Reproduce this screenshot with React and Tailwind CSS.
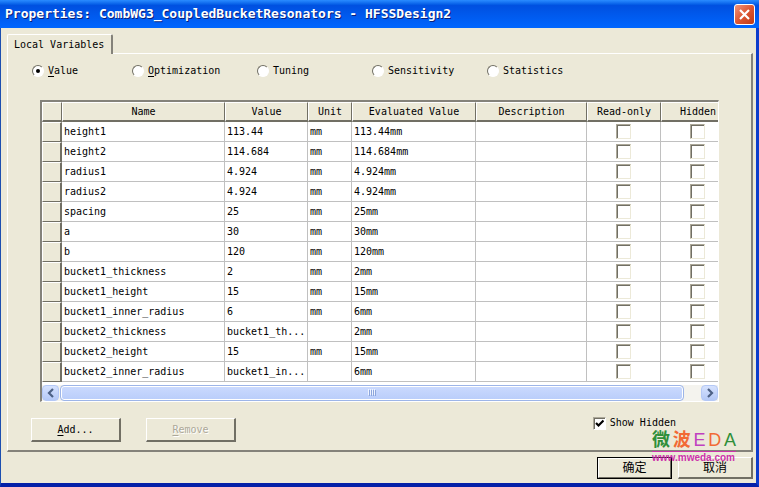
import { useState } from 'react';

const MODES = [
  { id: 'value', hotkey: 'V', rest: 'alue' },
  { id: 'optimization', hotkey: 'O', rest: 'ptimization' },
  { id: 'tuning', hotkey: '', rest: 'Tuning' },
  { id: 'sensitivity', hotkey: '', rest: 'Sensitivity' },
  { id: 'statistics', hotkey: '', rest: 'Statistics' },
];

const VARIABLES = [
  { name: 'height1', value: '113.44', unit: 'mm', evaluated: '113.44mm' },
  { name: 'height2', value: '114.684', unit: 'mm', evaluated: '114.684mm' },
  { name: 'radius1', value: '4.924', unit: 'mm', evaluated: '4.924mm' },
  { name: 'radius2', value: '4.924', unit: 'mm', evaluated: '4.924mm' },
  { name: 'spacing', value: '25', unit: 'mm', evaluated: '25mm' },
  { name: 'a', value: '30', unit: 'mm', evaluated: '30mm' },
  { name: 'b', value: '120', unit: 'mm', evaluated: '120mm' },
  { name: 'bucket1_thickness', value: '2', unit: 'mm', evaluated: '2mm' },
  { name: 'bucket1_height', value: '15', unit: 'mm', evaluated: '15mm' },
  { name: 'bucket1_inner_radius', value: '6', unit: 'mm', evaluated: '6mm' },
  { name: 'bucket2_thickness', value: 'bucket1_th...', unit: '', evaluated: '2mm' },
  { name: 'bucket2_height', value: '15', unit: 'mm', evaluated: '15mm' },
  { name: 'bucket2_inner_radius', value: 'bucket1_in...', unit: '', evaluated: '6mm' },
];

const HEADERS = ['Name', 'Value', 'Unit', 'Evaluated Value', 'Description', 'Read-only', 'Hidden'];

const RAISED = 'border-t border-l border-r-2 border-b-2 border-t-white border-l-white border-r-[#716f64] border-b-[#716f64]';
const HEAD_CELL = 'h-5 border-t border-l border-r border-b-2 border-t-white border-l-white border-r-[#716f64] border-b-[#716f64] bg-[#ece9d8] p-0 font-normal';
const CELL = 'h-5 overflow-hidden whitespace-nowrap border-r border-b border-[#c0c0c0] px-0.5 py-0';

const Radio = ({ mode, checked, onChange }) => (
  <label className="flex items-center gap-1">
    <span className="grid size-3 place-items-center">
      <input
        type="radio"
        name="mode"
        checked={checked}
        onChange={onChange}
        className="peer col-start-1 row-start-1 size-3 appearance-none rounded-full border border-t-[#716f64] border-l-[#716f64] border-r-white border-b-white bg-white"
      />
      <span className="pointer-events-none col-start-1 row-start-1 hidden size-1 rounded-full bg-black peer-checked:block" />
    </span>
    <span>
      {mode.hotkey && <u className="underline-offset-2">{mode.hotkey}</u>}
      {mode.rest}
    </span>
  </label>
);

const CellCheckbox = ({ label }) => (
  <input
    type="checkbox"
    aria-label={label}
    className="mx-auto block size-[15px] appearance-none border border-t-[#aca899] border-l-[#aca899] border-r-[#ece9d8] border-b-[#ece9d8] bg-white shadow-[inset_1px_1px_0_#716f64] checked:bg-[#716f64]"
  />
);

const VariableTable = () => (
  <table className="w-[693px] table-fixed border-separate border-spacing-0 bg-white">
    <colgroup>
      <col className="w-5" />
      <col className="w-[163px]" />
      <col className="w-[83px]" />
      <col className="w-[44px]" />
      <col className="w-[124px]" />
      <col className="w-[111px]" />
      <col className="w-[74px]" />
      <col className="w-[74px]" />
    </colgroup>
    <thead>
      <tr>
        <td className={HEAD_CELL} />
        {HEADERS.map((title) => (
          <th key={title} scope="col" className={HEAD_CELL}>{title}</th>
        ))}
      </tr>
    </thead>
    <tbody>
      {VARIABLES.map(({ name, value, unit, evaluated }) => (
        <tr key={name}>
          <td className="h-5 border-t border-l border-r-2 border-b border-t-white border-l-white border-r-[#716f64] border-b-[#716f64] bg-[#ece9d8] p-0" />
          <td className={CELL}>{name}</td>
          <td className={CELL}>{value}</td>
          <td className={CELL}>{unit}</td>
          <td className={CELL}>{evaluated}</td>
          <td className={CELL} />
          <td className={CELL}><CellCheckbox label={`${name} read-only`} /></td>
          <td className={CELL}><CellCheckbox label={`${name} hidden`} /></td>
        </tr>
      ))}
    </tbody>
  </table>
);

const ScrollButton = ({ label, path }) => (
  <button aria-label={label} className="grid h-4 w-[17px] shrink-0 place-items-center rounded-sm border border-[#b4c8f6] bg-linear-to-b from-[#d6e2fe] to-[#b4c8f6]">
    <svg width="8" height="10" viewBox="0 0 8 10" fill="none" stroke="#4d6185" strokeWidth="2.2">
      <path d={path} />
    </svg>
  </button>
);

const ScrollBar = () => (
  <div className="mt-[3px] flex h-4 gap-px bg-[#f4f3ee]">
    <ScrollButton label="Scroll left" path="M6 1 L2 5 L6 9" />
    <div className="flex flex-1">
      <div className="flex w-[97.5%] items-center justify-center gap-px rounded-sm border border-[#9db5e8] bg-linear-to-b from-[#cbdafe] to-[#b9cdfa] shadow-[inset_0_0_0_1px_white]">
        {[0, 1, 2, 3].map((i) => (
          <span key={i} className="h-1.5 w-px bg-[#8ca6dc] shadow-[-1px_-1px_0_#eef3ff]" />
        ))}
      </div>
    </div>
    <ScrollButton label="Scroll right" path="M2 1 L6 5 L2 9" />
  </div>
);

const Watermark = () => (
  <div className="pointer-events-none absolute right-5 bottom-[19px] w-[84px] font-['Liberation_Sans','Noto_Sans_CJK_SC',sans-serif] text-[#cc33aa]">
    <div className="flex h-6 items-center justify-between border-b border-[#cc33aa] text-[18px] leading-6">
      <span className="font-bold text-[#2f8f3a]">微</span>
      <span className="font-bold text-[#f26a35]">波</span>
      <span className="text-[#c040c0]">E</span>
      <span className="text-[#f26a35]">D</span>
      <span className="text-[#2f8f3a]">A</span>
    </div>
    <div className="text-[10px] leading-3 font-bold">www.mweda.com</div>
  </div>
);

export default function App() {
  const [mode, setMode] = useState('value');
  const [showHidden, setShowHidden] = useState(true);

  return (
    <div className="relative border-r-[3px] border-b-4 border-l border-r-[#0c3ccc] border-b-[#0420a8] border-l-[#1c4fb0] bg-[#ece9d8] font-['DejaVu_Sans_Mono','Liberation_Mono','Noto_Sans_CJK_SC',monospace] text-[10px] leading-4 text-black">
      <header className="-mr-[3px] -ml-px flex h-7 items-center justify-between bg-linear-to-b from-[#2a8cff] via-[#0050e0] via-20% to-[#0066ff] pr-1 pl-[5px] text-white">
        <h1 className="text-[13px] font-bold whitespace-nowrap [text-shadow:1px_1px_0_#0a1f7a]">
          Properties: CombWG3_CoupledBucketResonators - HFSSDesign2
        </h1>
        <button aria-label="Close" className="grid size-[21px] place-items-center rounded-[3px] border border-white bg-linear-to-br from-[#f0937a] via-[#dc5632] to-[#c03a14]">
          <svg width="13" height="13" viewBox="0 0 13 13" stroke="white" strokeWidth="2.2">
            <path d="M2 2 L11 11 M11 2 L2 11" />
          </svg>
        </button>
      </header>

      <main className="pt-1.5 pr-[3px] pb-1 pl-1.5">
        <div role="tablist" className="flex">
          <button role="tab" aria-selected="true" className="-mb-px h-5 rounded-t-xs border-t border-r-2 border-l border-t-white border-r-[#84827a] border-l-white bg-[#ece9d8] pr-[7px] pl-1.5">
            Local Variables
          </button>
        </div>

        <section className="border-t border-r-2 border-b-2 border-l border-t-white border-r-[#84827a] border-b-[#84827a] border-l-white pt-[9px] pb-2">
          <div role="radiogroup" aria-label="Variable mode" className="grid grid-cols-[100px_125px_115px_115px_1fr] pl-6">
            {MODES.map((item) => (
              <Radio key={item.id} mode={item} checked={mode === item.id} onChange={() => setMode(item.id)} />
            ))}
          </div>

          <div className="mx-8 mt-[21px] overflow-hidden border-t-2 border-r border-b border-l-2 border-t-[#84827a] border-r-white border-b-white border-l-[#84827a] bg-white">
            <div className="overflow-hidden">
              <VariableTable />
            </div>
            <ScrollBar />
          </div>

          <div className="mt-4 flex items-start pr-[75px] pl-[23px]">
            <button className={`h-6 w-[90px] ${RAISED}`}>
              <u className="underline-offset-2">A</u>dd...
            </button>
            <button disabled className={`ml-[25px] h-6 w-[90px] text-[#aca899] [text-shadow:1px_1px_0_white] ${RAISED}`}>
              <u className="underline-offset-2">R</u>emove
            </button>
            <label className="ml-auto flex h-2.5 items-center gap-1">
              <span className="grid size-[13px] place-items-center">
                <input
                  type="checkbox"
                  checked={showHidden}
                  onChange={(e) => setShowHidden(e.target.checked)}
                  className="peer col-start-1 row-start-1 size-[13px] appearance-none border border-t-[#aca899] border-l-[#aca899] border-r-white border-b-white bg-white shadow-[inset_1px_1px_0_#716f64]"
                />
                <svg className="pointer-events-none col-start-1 row-start-1 hidden peer-checked:block" width="9" height="9" viewBox="0 0 9 9" fill="none" stroke="black" strokeWidth="2.2">
                  <path d="M1 4 L3.5 6.5 L8.5 1.5" />
                </svg>
              </span>
              Show Hidden
            </label>
          </div>
        </section>

        <footer className="mt-[5px] flex justify-end gap-1.5 text-[12px]">
          <button className="h-[22px] w-[75px] border border-black">
            <span className="block h-full border border-t-white border-r-[#716f64] border-b-[#716f64] border-l-white leading-[18px]">确定</span>
          </button>
          <button className={`h-[22px] w-[75px] leading-[18px] ${RAISED}`}>取消</button>
        </footer>
      </main>

      <Watermark />
    </div>
  );
}
